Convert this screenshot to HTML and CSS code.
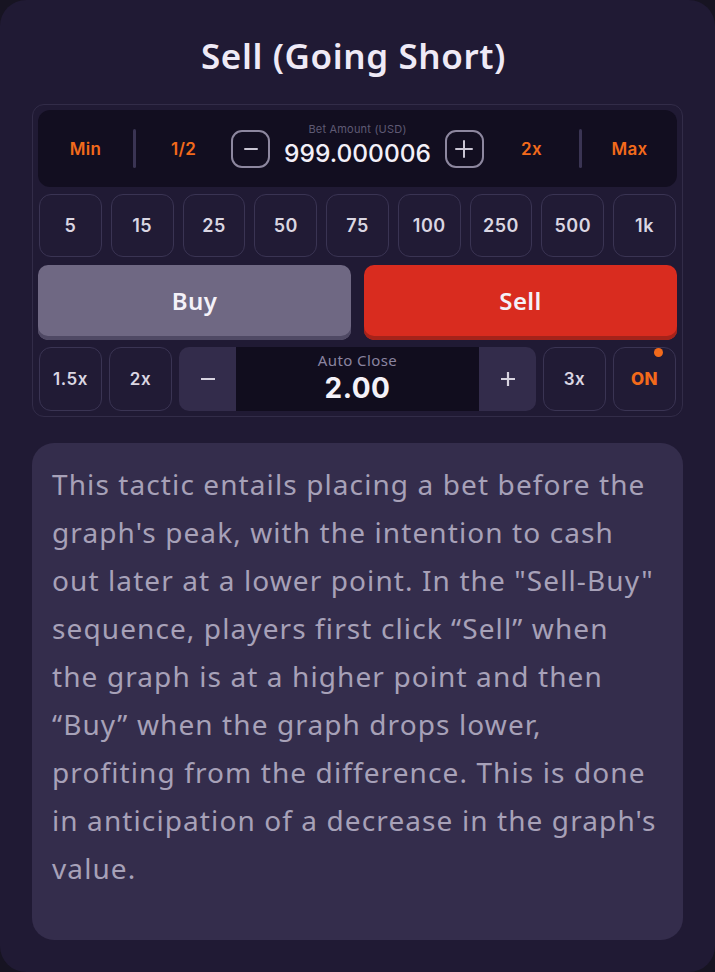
FILE: index.html
```html
<!DOCTYPE html>
<html>
<head>
<meta charset="utf-8">
<link rel="stylesheet" href="styles.css">
</head>
<body>
<div class="card">
  <h1 class="title">Sell (Going Short)</h1>
  <div class="panel">
    <div class="bet-row">
      <span class="quick">Min</span>
      <span class="divider"></span>
      <span class="quick">1/2</span>
      <div class="bet-center">
        <button class="round-btn" aria-label="minus">
          <svg width="18" height="18" viewBox="0 0 18 18"><path d="M3 9h12" stroke="#c9c5d3" stroke-width="2" stroke-linecap="round"/></svg>
        </button>
        <div class="amount">
          <span class="amount-label">Bet Amount (USD)</span>
          <span class="amount-value">999.000006</span>
        </div>
        <button class="round-btn" aria-label="plus">
          <svg width="20" height="20" viewBox="0 0 20 20"><path d="M2 10h16M10 2v16" stroke="#c9c5d3" stroke-width="2" stroke-linecap="round"/></svg>
        </button>
      </div>
      <span class="quick">2x</span>
      <span class="divider"></span>
      <span class="quick">Max</span>
    </div>
    <div class="chips">
      <button class="chip">5</button>
      <button class="chip">15</button>
      <button class="chip">25</button>
      <button class="chip">50</button>
      <button class="chip">75</button>
      <button class="chip">100</button>
      <button class="chip">250</button>
      <button class="chip">500</button>
      <button class="chip">1k</button>
    </div>
    <div class="actions">
      <button class="action buy">Buy</button>
      <button class="action sell">Sell</button>
    </div>
    <div class="bottom-row">
      <button class="chip small">1.5x</button>
      <button class="chip small">2x</button>
      <div class="auto">
        <button class="auto-btn">
          <svg width="20" height="20" viewBox="0 0 20 20"><path d="M3 10h14" stroke="#d8d4e0" stroke-width="2.2"/></svg>
        </button>
        <div class="auto-mid">
          <span class="auto-label">Auto Close</span>
          <span class="auto-value">2.00</span>
        </div>
        <button class="auto-btn">
          <svg width="20" height="20" viewBox="0 0 20 20"><path d="M3 10h14M10 3v14" stroke="#d8d4e0" stroke-width="2.2"/></svg>
        </button>
      </div>
      <button class="chip small">3x</button>
      <button class="chip small on">ON<span class="dot"></span></button>
    </div>
  </div>
  <div class="desc">
    <p>This tactic entails placing a bet before the graph's peak, with the intention to cash out later at a lower point. In the "Sell-Buy" sequence, players first click “Sell” when the graph is at a higher point and then “Buy” when the graph drops lower, profiting from the difference. This is done in anticipation of a decrease in the graph's value.</p>
  </div>
</div>
</body>
</html>
```
FILE: styles.css
```css
* { box-sizing: border-box; }
html, body { margin: 0; padding: 0; background: #171422; }
body { width: 715px; height: 972px; font-family: "Noto Sans", Lato, sans-serif; }
.card {
  width: 715px; height: 972px; background: #201a34; border-radius: 26px;
  padding: 32px 32px 32px 32px; display: flex; flex-direction: column;
}
.title {
  margin: 0; height: 48px; line-height: 48px; text-align: center; color: #efeaf6;
  font-size: 35px; font-weight: 600; letter-spacing: 0.6px; padding-right: 8px;
}
.panel {
  margin-top: 24px; border: 1.5px solid #322c48; border-radius: 12px; padding: 5px 5px 5px 5px;
  display: flex; flex-direction: column; gap: 7px;
}
.bet-row {
  height: 77px; background: #120e20; border-radius: 12px; display: flex; align-items: center;
}
.quick { width: 95px; text-align: center; color: #f26a1b; font-family: Inter, sans-serif; font-weight: 600; font-size: 17px; letter-spacing: 0.3px; }
.divider { width: 3px; height: 39px; background: #3a3453; border-radius: 2px; }
.bet-center { flex: 1; display: flex; align-items: center; justify-content: space-between; }
.round-btn {
  width: 39px; height: 38px; border: 2px solid #8d879f; border-radius: 11px; background: transparent;
  display: flex; align-items: center; justify-content: center; padding: 0;
}
.amount { display: flex; flex-direction: column; align-items: center; }
.amount-label { font-family: Inter, sans-serif; font-size: 11px; color: #5f5a74; margin-top: -8px; letter-spacing: 0.2px; }
.amount-value { font-family: Inter, sans-serif; font-size: 24.5px; font-weight: 500; color: #f3f0f8; margin-top: 2px; }
.chips { display: flex; gap: 8.8px; padding: 0 1px; }
.chip {
  flex: 1; height: 63px; border: 1.5px solid #3a3453; border-radius: 12px; background: #211b35;
  color: #dad6e2; font-family: Inter, sans-serif; font-size: 18px; font-weight: 600; padding: 0; letter-spacing: 0.5px;
}
.actions { display: flex; gap: 13px; margin-top: 1px; }
.action {
  flex: 1; height: 75px; border: none; border-radius: 10px; color: #f4f1f8;
  font-family: "Noto Sans", sans-serif; font-size: 24px; font-weight: 600; padding: 0 0 5px 0; letter-spacing: 0.4px;
}
.buy { background: #6f6883; box-shadow: inset 0 -4px 0 #4f4964; }
.sell { background: #d92c1f; box-shadow: inset 0 -4px 0 #a5231a; }
.bottom-row { display: flex; gap: 7px; align-items: stretch; height: 64px; padding: 0 1px; }
.chip.small { flex: 0 0 63px; height: 64px; font-size: 17px; position: relative; }
.chip.on { color: #f26a1b; font-weight: 800; }
.dot { position: absolute; top: 0; right: 12px; width: 9px; height: 9px; border-radius: 50%; background: #f26a1b; }
.auto { flex: 1; display: flex; border-radius: 10px; overflow: hidden; }
.auto-btn {
  width: 57px; border: none; background: #332c4b; display: flex; align-items: center; justify-content: center; padding: 0;
}
.auto-mid {
  flex: 1; background: #110d1e; display: flex; flex-direction: column; align-items: center; justify-content: flex-start;
  padding-top: 3px;
}
.auto-label { display: block; font-family: "Noto Sans", sans-serif; font-size: 15px; color: #8a84a0; line-height: 21px; letter-spacing: 0.4px; }
.auto-value { display: block; font-family: Inter, sans-serif; font-size: 28px; font-weight: 700; color: #f4f1f8; line-height: 34px; letter-spacing: 0.5px; }
.desc {
  margin-top: 26px; background: #342d4c; border-radius: 22px; height: 498px; padding: 17px 20px 0 20px;
}
.desc p {
  margin: 0; color: #a7a1b8; font-family: "Noto Sans", sans-serif; font-size: 28px; line-height: 48px;
  letter-spacing: 1.1px;
}
```
